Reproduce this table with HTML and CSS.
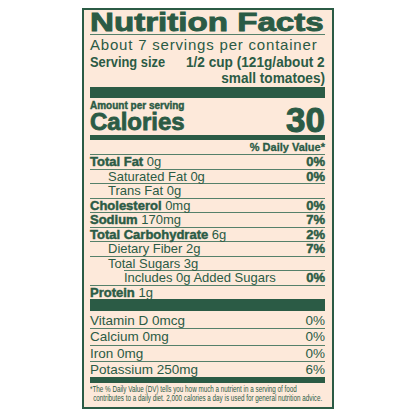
FILE: index.html
```html
<!DOCTYPE html>
<html lang="en">
<head>
<meta charset="utf-8">
<title>Nutrition Facts</title>
<link rel="stylesheet" href="styles.css">
</head>
<body>
<div class="label">
  <h1 class="title"><span class="title-text">Nutrition Facts</span></h1>
  <div class="servings">About 7 servings per container</div>
  <div class="serving-size">
    <div class="ss-label"><span class="ss-label-text">Serving size</span></div>
    <div class="ss-value">
      <span class="ss-line">1/2 cup (121g/about 2</span>
      <span class="ss-line">small tomatoes)</span>
    </div>
  </div>
  <div class="bar bar-xl"></div>
  <div class="cal">
    <div class="cal-left">
      <div class="amount">Amount per serving</div>
      <div class="cal-word">Calories</div>
    </div>
    <div class="cal-num">30</div>
  </div>
  <div class="bar bar-md"></div>
  <div class="dv">% Daily Value*</div>
  <div class="row"><span><b class="hv">Total Fat</b> 0g</span><b class="hv">0%</b></div>
  <div class="row sub"><span>Saturated Fat 0g</span><b class="hv">0%</b></div>
  <div class="row sub"><span>Trans Fat 0g</span></div>
  <div class="row"><span><b class="hv">Cholesterol</b> 0mg</span><b class="hv">0%</b></div>
  <div class="row"><span><b class="hv">Sodium</b> 170mg</span><b class="hv">7%</b></div>
  <div class="row"><span><b class="hv">Total Carbohydrate</b> 6g</span><b class="hv">2%</b></div>
  <div class="row sub"><span>Dietary Fiber 2g</span><b class="hv">7%</b></div>
  <div class="row sub"><span>Total Sugars 3g</span></div>
  <div class="row sub2"><span>Includes 0g Added Sugars</span><b class="hv">0%</b></div>
  <div class="row"><span><b class="hv">Protein</b> 1g</span></div>
  <div class="bar bar-xl2"></div>
  <div class="vit">
    <div class="vrow"><span>Vitamin D 0mcg</span><span>0%</span></div>
    <div class="vrow"><span>Calcium 0mg</span><span>0%</span></div>
    <div class="vrow"><span>Iron 0mg</span><span>0%</span></div>
    <div class="vrow"><span>Potassium 250mg</span><span>6%</span></div>
  </div>
  <div class="bar bar-lg"></div>
  <div class="foot">
    <div class="foot-text">*The % Daily Value (DV) tells you how much a nutrient in a serving of food<br><span class="foot-l2">contributes to a daily diet. 2,000 calories a day is used for general nutrition advice.</span></div>
  </div>
</div>
</body>
</html>
```
FILE: styles.css
```css
html, body {
  margin: 0;
  padding: 0;
  background: #ffffff;
  overflow: hidden;
}

.label {
  box-sizing: border-box;
  width: 252px;
  margin: 8px 0 0 82px;
  border: 2px solid #2b5b45;
  background: #fde9da;
  padding: 0 7px 0 6px;
  color: #2b5b45;
  font-family: "Liberation Sans", Arial, sans-serif;
}

.title {
  margin: 0;
  font-size: 26.5px;
  line-height: 24px;
  font-weight: 700;
  border-bottom: 1px solid #55806a;
  white-space: nowrap;
}

.title-text {
  display: inline-block;
  transform: scaleX(1.25);
  transform-origin: left center;
  -webkit-text-stroke: 0.9px #2b5b45;
}

.servings {
  font-size: 15px;
  line-height: 19px;
  letter-spacing: 0.8px;
}

.serving-size {
  display: flex;
  justify-content: space-between;
  font-weight: 700;
  font-size: 15.5px;
  line-height: 16.3px;
  white-space: nowrap;
}

.ss-label {
  flex: none;
  width: 75px;
}

.ss-label-text {
  display: inline-block;
  transform: scaleX(0.83);
  transform-origin: left center;
}

.ss-value {
  flex: none;
  width: 141px;
  display: flex;
  flex-direction: column;
  align-items: flex-end;
}

.ss-line {
  display: block;
  transform: scaleX(0.88);
  transform-origin: right center;
}

.bar {
  background: #2b5b45;
}
.bar-xl { height: 11px; }
.bar-xl2 { height: 12px; }
.bar-md { height: 5px; }
.bar-lg { height: 6px; }

.cal {
  display: flex;
  justify-content: space-between;
  align-items: flex-end;
  padding: 2px 0 3.4px;
}

.amount {
  font-size: 10px;
  line-height: 12px;
  font-weight: 700;
  -webkit-text-stroke: 0.4px #2b5b45;
}

.cal-word {
  font-size: 24px;
  line-height: 20px;
  font-weight: 700;
  -webkit-text-stroke: 0.8px #2b5b45;
}

.cal-num {
  font-size: 35px;
  line-height: 25px;
  font-weight: 700;
  -webkit-text-stroke: 1px #2b5b45;
}

.dv {
  text-align: right;
  font-size: 11px;
  line-height: 13px;
  padding-top: 1px;
  font-weight: 700;
  -webkit-text-stroke: 0.3px #2b5b45;
}

.row {
  display: flex;
  justify-content: space-between;
  border-top: 1px solid #55806a;
  font-size: 13px;
  line-height: 13.55px;
  white-space: nowrap;
}

.row.sub {
  padding-left: 18px;
}

.row.sub2 {
  margin-left: 34px;
}

.hv {
  font-weight: 700;
  -webkit-text-stroke: 0.45px #2b5b45;
}

.vit {
  padding-top: 1.4px;
}

.vrow {
  display: flex;
  justify-content: space-between;
  font-size: 13.5px;
  line-height: 15.4px;
  border-bottom: 1px solid #55806a;
}

.vrow:last-child {
  border-bottom: none;
}

.foot {
  padding: 1.6px 0 4.9px;
  overflow: hidden;
}

.foot-text {
  width: 336px;
  font-size: 9px;
  line-height: 8.5px;
  white-space: nowrap;
  transform: scaleX(0.7);
  transform-origin: left top;
}

.foot-l2 {
  padding-left: 4.5px;
}
```
